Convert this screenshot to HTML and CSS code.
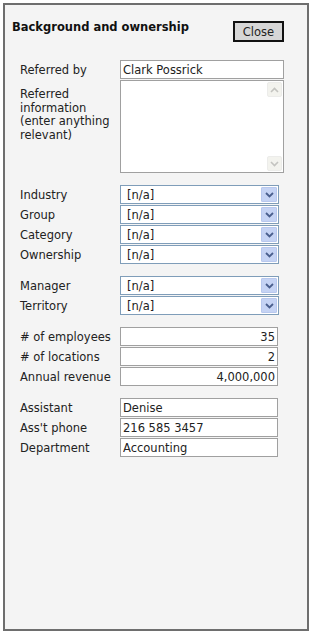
FILE: index.html
```html
<!DOCTYPE html>
<html lang="en">
<head>
    <meta charset="UTF-8">
    <meta name="viewport" content="width=device-width, initial-scale=1.0">
    <title>Background and ownership</title>
    <link rel="stylesheet" href="styles.css">
</head>
<body>
    <div class="panel">
        <div class="panel-head">
            <h2>Background and ownership</h2>
            <button class="close-btn" type="button">Close</button>
        </div>
        <div class="form">
            <div class="group">
                <div class="row">
                    <label>Referred by</label>
                    <input class="text wide" type="text" value="Clark Possrick">
                </div>
                <div class="row row-tall">
                    <label>Referred information (enter anything relevant)</label>
                    <div class="textarea">
                        <div class="textarea-body"></div>
                        <div class="scrollbar">
                            <span class="scroll-btn">
                                <svg width="9" height="6" viewBox="0 0 9 6"><path d="M1 5 L4.5 1.5 L8 5" fill="none" stroke="#c4c4c0" stroke-width="1.6"/></svg>
                            </span>
                            <span class="scroll-btn">
                                <svg width="9" height="6" viewBox="0 0 9 6"><path d="M1 1 L4.5 4.5 L8 1" fill="none" stroke="#c4c4c0" stroke-width="1.6"/></svg>
                            </span>
                        </div>
                    </div>
                </div>
            </div>

            <div class="group">
                <div class="row"><label>Industry</label><div class="select"><span>[n/a]</span><span class="arrow"><svg width="9" height="6" viewBox="0 0 9 6"><path d="M1 1 L4.5 4.5 L8 1" fill="none" stroke="#4a5f8e" stroke-width="1.8"/></svg></span></div></div>
                <div class="row"><label>Group</label><div class="select"><span>[n/a]</span><span class="arrow"><svg width="9" height="6" viewBox="0 0 9 6"><path d="M1 1 L4.5 4.5 L8 1" fill="none" stroke="#4a5f8e" stroke-width="1.8"/></svg></span></div></div>
                <div class="row"><label>Category</label><div class="select"><span>[n/a]</span><span class="arrow"><svg width="9" height="6" viewBox="0 0 9 6"><path d="M1 1 L4.5 4.5 L8 1" fill="none" stroke="#4a5f8e" stroke-width="1.8"/></svg></span></div></div>
                <div class="row"><label>Ownership</label><div class="select"><span>[n/a]</span><span class="arrow"><svg width="9" height="6" viewBox="0 0 9 6"><path d="M1 1 L4.5 4.5 L8 1" fill="none" stroke="#4a5f8e" stroke-width="1.8"/></svg></span></div></div>
            </div>

            <div class="group">
                <div class="row"><label>Manager</label><div class="select"><span>[n/a]</span><span class="arrow"><svg width="9" height="6" viewBox="0 0 9 6"><path d="M1 1 L4.5 4.5 L8 1" fill="none" stroke="#4a5f8e" stroke-width="1.8"/></svg></span></div></div>
                <div class="row"><label>Territory</label><div class="select"><span>[n/a]</span><span class="arrow"><svg width="9" height="6" viewBox="0 0 9 6"><path d="M1 1 L4.5 4.5 L8 1" fill="none" stroke="#4a5f8e" stroke-width="1.8"/></svg></span></div></div>
            </div>

            <div class="group">
                <div class="row"><label># of employees</label><input class="text num" type="text" value="35"></div>
                <div class="row"><label># of locations</label><input class="text num" type="text" value="2"></div>
                <div class="row"><label>Annual revenue</label><input class="text num" type="text" value="4,000,000"></div>
            </div>

            <div class="group">
                <div class="row"><label>Assistant</label><input class="text" type="text" value="Denise"></div>
                <div class="row"><label>Ass't phone</label><input class="text" type="text" value="216 585 3457"></div>
                <div class="row"><label>Department</label><input class="text" type="text" value="Accounting"></div>
            </div>
        </div>
    </div>
</body>
</html>
```

FILE: styles.css
```css
body {
    margin: 0;
    background-color: #ffffff;
    font-family: "DejaVu Sans", Verdana, sans-serif;
    font-size: 11.5px;
    color: #222;
}
.panel {
    box-sizing: border-box;
    margin: 3px;
    width: 306px;
    height: 628px;
    border: 2px solid #6e6e6e;
    background-color: #f4f4f4;
    padding: 16px 23px 0 7px;
}
.panel-head {
    display: flex;
    justify-content: space-between;
    align-items: flex-start;
}
.panel-head h2 {
    margin: 0;
    font-size: 11.5px;
    line-height: 13px;
    font-weight: bold;
    color: #111;
}
.close-btn {
    box-sizing: border-box;
    width: 51px;
    height: 21px;
    margin: 0;
    padding: 0;
    border: 2px solid #111;
    background-color: #d6d6d6;
    font-family: "DejaVu Sans", Verdana, sans-serif;
    font-size: 11.5px;
    color: #222;
}
.form {
    margin-top: 18px;
    padding-left: 8px;
}
.group {
    margin-bottom: 12px;
}
.row {
    display: flex;
    align-items: center;
    margin-bottom: 1px;
}
.row label {
    width: 100px;
    flex-shrink: 0;
    line-height: 13.5px;
    padding-top: 2px;
}
.row-tall {
    align-items: flex-start;
}
.row-tall label {
    padding-top: 8px;
    padding-right: 4px;
    box-sizing: border-box;
}
.text {
    box-sizing: border-box;
    width: 158px;
    height: 19px;
    margin: 0;
    padding: 0 2px;
    border: 1px solid #a0a0a0;
    background-color: #ffffff;
    font-family: "DejaVu Sans", Verdana, sans-serif;
    font-size: 11.5px;
    color: #222;
    outline: none;
}
.text.wide {
    width: 168px;
}
.text.num {
    text-align: right;
}
.textarea {
    box-sizing: border-box;
    display: flex;
    width: 168px;
    height: 93px;
    border: 1px solid #a0a0a0;
    background-color: #ffffff;
}
.textarea-body {
    flex: 1;
}
.scrollbar {
    width: 17px;
    display: flex;
    flex-direction: column;
    justify-content: space-between;
    align-items: center;
    padding: 1px 0;
}
.scroll-btn {
    box-sizing: border-box;
    width: 15px;
    height: 15px;
    display: flex;
    align-items: center;
    justify-content: center;
    background-color: #f3f3ee;
    border: 1px solid #ececea;
    border-radius: 2px;
}
.select {
    box-sizing: border-box;
    display: flex;
    align-items: center;
    justify-content: space-between;
    width: 159px;
    height: 19px;
    border: 1px solid #7f9db9;
    background-color: #ffffff;
    padding: 0 1px 0 6px;
}
.arrow {
    box-sizing: border-box;
    width: 16px;
    height: 15px;
    display: flex;
    align-items: center;
    justify-content: center;
    background-color: #c5d3f4;
    border: 1px solid #b8c8ee;
    border-radius: 1px;
}
```
